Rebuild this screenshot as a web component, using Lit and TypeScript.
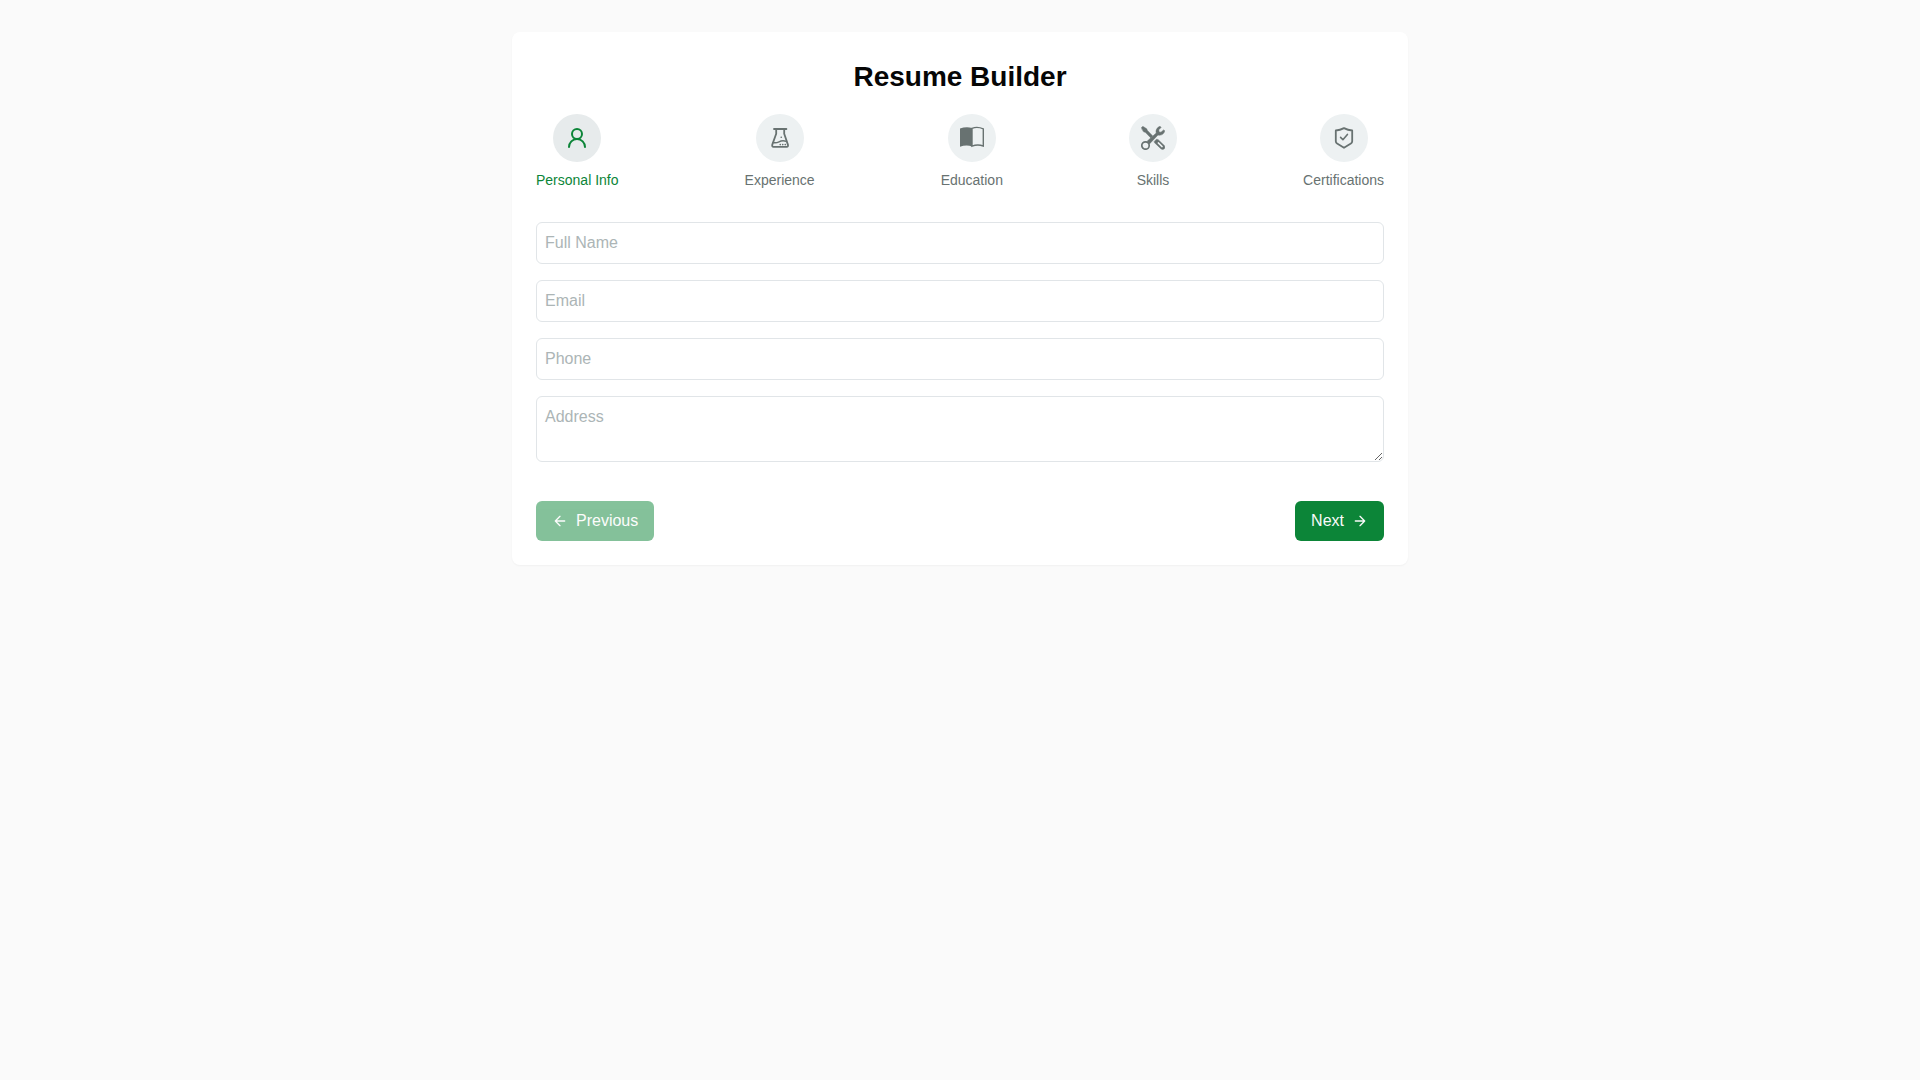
import { LitElement, html, svg, css, type SVGTemplateResult } from "lit";
import { customElement, state } from "lit/decorators.js";
import { classMap } from "lit/directives/class-map.js";

interface Step {
  label: string;
  icon: SVGTemplateResult;
}

const STEPS: Step[] = [
  {
    label: "Personal Info",
    icon: svg`<g stroke-width="2"><circle cx="12" cy="8" r="5" /><path d="M20 21a8 8 0 0 0-16 0" /></g>`,
  },
  {
    label: "Experience",
    icon: svg`<g stroke-width="1.8">
      <path d="M6 3h12.400M8.200 3v4.800L4.300 18.600c-.4 1.400.1 2.200 1.200 2.200h13.200c1.100 0 1.600-.8 1.200-2.200L16.200 7.800V3" />
      <path stroke-width="1.500" d="M5.200 16.600c2.200.6 3.900.2 5.800-.8 2.400-1.200 4.600-1.400 7.200-.4" />
      <path stroke-width="1.600" d="M13.200 11.200h.1M12.200 18.600h.1M14.700 18.600h.1M17.200 18.600h.1" />
    </g>`,
  },
  {
    label: "Education",
    icon: svg`<g stroke-width="1.4">
      <path fill="currentColor" stroke="none" d="M0 2.600C4 .9 8.500.7 12 2v18.600C8.500 18.900 4 19.200 0 20.800z" />
      <path stroke-linecap="butt" stroke-linejoin="miter" d="M12 2.300c3.500-1.300 7.600-1.100 11.300.6v17.100c-3.700-1.400-7.800-1.300-11.300.2z" />
    </g>`,
  },
  {
    label: "Skills",
    icon: svg`
      <path fill="currentColor" stroke-width=".4" d="M.3 1.800 1.800.3l3.900 2.400.8 1.900 5.300 5.300-2 2-5.300-5.300-1.900-.8z" />
      <path fill="currentColor" stroke-width=".4" d="m13.200 15.400 2.200-2.200 1.600.2 6.100 5.900c1.100 1.200 1.100 2.400.2 3.500-1 .9-2.400.9-3.500-.1l-6.300-6z" />
      <path class="cut" stroke-width="1.500" d="m17.300 16.900 3.800 3.700" />
      <path fill="currentColor" stroke-width=".5" d="M6.100 15.300 15.200 7c-.7-2.900.8-5.700 3.900-6.700l1 1.100-2.300 2.400.3 2.100 1.900.3 2.600-2.300 1.200.9c-.7 3.300-3.700 5-6.800 4.200l-8.500 8.900z" />
      <circle class="hole" cx="4.500" cy="19.500" r="3.700" stroke-width="1.700" />`,
  },
  {
    label: "Certifications",
    icon: svg`<g stroke-width="1.8">
      <path d="M12 2.100c2.600 1.400 5.300 2.200 8.200 2.400v10.800c0 1.100-.4 1.700-1.300 2.300L12 21.800l-6.900-4.200c-.9-.6-1.300-1.200-1.300-2.300V4.500C6.700 4.300 9.400 3.500 12 2.100z" />
      <path stroke-width="1.600" d="m8.600 11.400 2.300 2.300 4.500-5.300" />
    </g>`,
  },
];

@customElement("app-root")
export class AppRoot extends LitElement {
  @state() private current = 0;

  static styles = css`
    :host {
      display: block;
      box-sizing: border-box;
      min-height: 100vh;
      padding: 32px;
      background: #fafafa;
      color: #060606;
      font: 16px/24px "Liberation Sans", Arial, sans-serif;
    }
    * {
      box-sizing: border-box;
    }
    .card {
      max-width: 896px;
      margin: 0 auto;
      padding: 24px;
      background: #fff;
      border-radius: 8px;
      box-shadow: 0 1px 2px rgb(0 0 0 / 4%);
    }
    .title {
      margin: 0 0 16px;
      font-size: 28px;
      line-height: 42px;
      font-weight: 700;
      text-align: center;
    }
    .steps {
      display: flex;
      justify-content: space-between;
      margin: 0 0 32px;
      padding: 0;
      list-style: none;
    }
    .step {
      display: flex;
      flex-direction: column;
      align-items: center;
      gap: 8px;
      padding: 0;
      border: 0;
      background: none;
      color: #687271;
      font: inherit;
      font-size: 14px;
      line-height: 20px;
      cursor: pointer;
    }
    .badge {
      display: grid;
      place-items: center;
      width: 48px;
      height: 48px;
      border-radius: 50%;
      background: #edf1f2;
    }
    .step.active {
      color: #0c8538;
    }
    .step.active .badge {
      background: #e7ebec;
    }
    .icon {
      width: 24px;
      height: 24px;
      fill: none;
      stroke: currentColor;
      stroke-linecap: round;
      stroke-linejoin: round;
    }
    .icon .cut {
      stroke: #edf1f2;
    }
    .icon .hole {
      fill: #edf1f2;
    }
    .fields {
      display: flex;
      flex-direction: column;
      gap: 16px;
    }
    .control {
      display: block;
      width: 100%;
      margin: 0;
      padding: 8px;
      border: 1px solid #e1e5e8;
      border-radius: 6px;
      background: #fff;
      color: inherit;
      font: inherit;
    }
    input.control {
      height: 42px;
    }
    .control::placeholder {
      color: #acb5b6;
    }
    .actions {
      display: flex;
      justify-content: space-between;
      margin-top: 39px;
    }
    .button {
      display: flex;
      align-items: center;
      gap: 8px;
      padding: 8px 16px;
      border: 0;
      border-radius: 6px;
      background: #0c8538;
      color: #fafafa;
      font: inherit;
      cursor: pointer;
    }
    .button:disabled {
      opacity: 0.5;
      cursor: not-allowed;
    }
    .arrow {
      width: 16px;
      height: 16px;
      stroke-width: 2;
    }
  `;

  private go(index: number) {
    this.current = Math.max(0, Math.min(STEPS.length - 1, index));
  }

  render() {
    return html`
      <main class="card">
        <h1 class="title">Resume Builder</h1>
        <ol class="steps">
          ${STEPS.map(
            (step, i) => html`<li>
              <button
                type="button"
                class=${classMap({ step: true, active: i === this.current })}
                aria-current=${i === this.current ? "step" : "false"}
                @click=${() => this.go(i)}
              >
                <span class="badge"><svg class="icon" viewBox="0 0 24 24" aria-hidden="true">${step.icon}</svg></span>
                <span>${step.label}</span>
              </button>
            </li>`
          )}
        </ol>
        <form @submit=${(e: Event) => e.preventDefault()}>
          <div class="fields">
            <input class="control" type="text" name="name" placeholder="Full Name" aria-label="Full Name" />
            <input class="control" type="email" name="email" placeholder="Email" aria-label="Email" />
            <input class="control" type="tel" name="phone" placeholder="Phone" aria-label="Phone" />
            <textarea class="control" name="address" rows="2" placeholder="Address" aria-label="Address"></textarea>
          </div>
          <div class="actions">
            <button class="button" type="button" ?disabled=${this.current === 0} @click=${() => this.go(this.current - 1)}>
              <svg class="icon arrow" viewBox="0 0 24 24" aria-hidden="true"><path d="m12 19-7-7 7-7M19 12H5" /></svg>
              Previous
            </button>
            <button class="button" type="button" @click=${() => this.go(this.current + 1)}>
              Next
              <svg class="icon arrow" viewBox="0 0 24 24" aria-hidden="true"><path d="M5 12h14M12 5l7 7-7 7" /></svg>
            </button>
          </div>
        </form>
      </main>
    `;
  }
}
